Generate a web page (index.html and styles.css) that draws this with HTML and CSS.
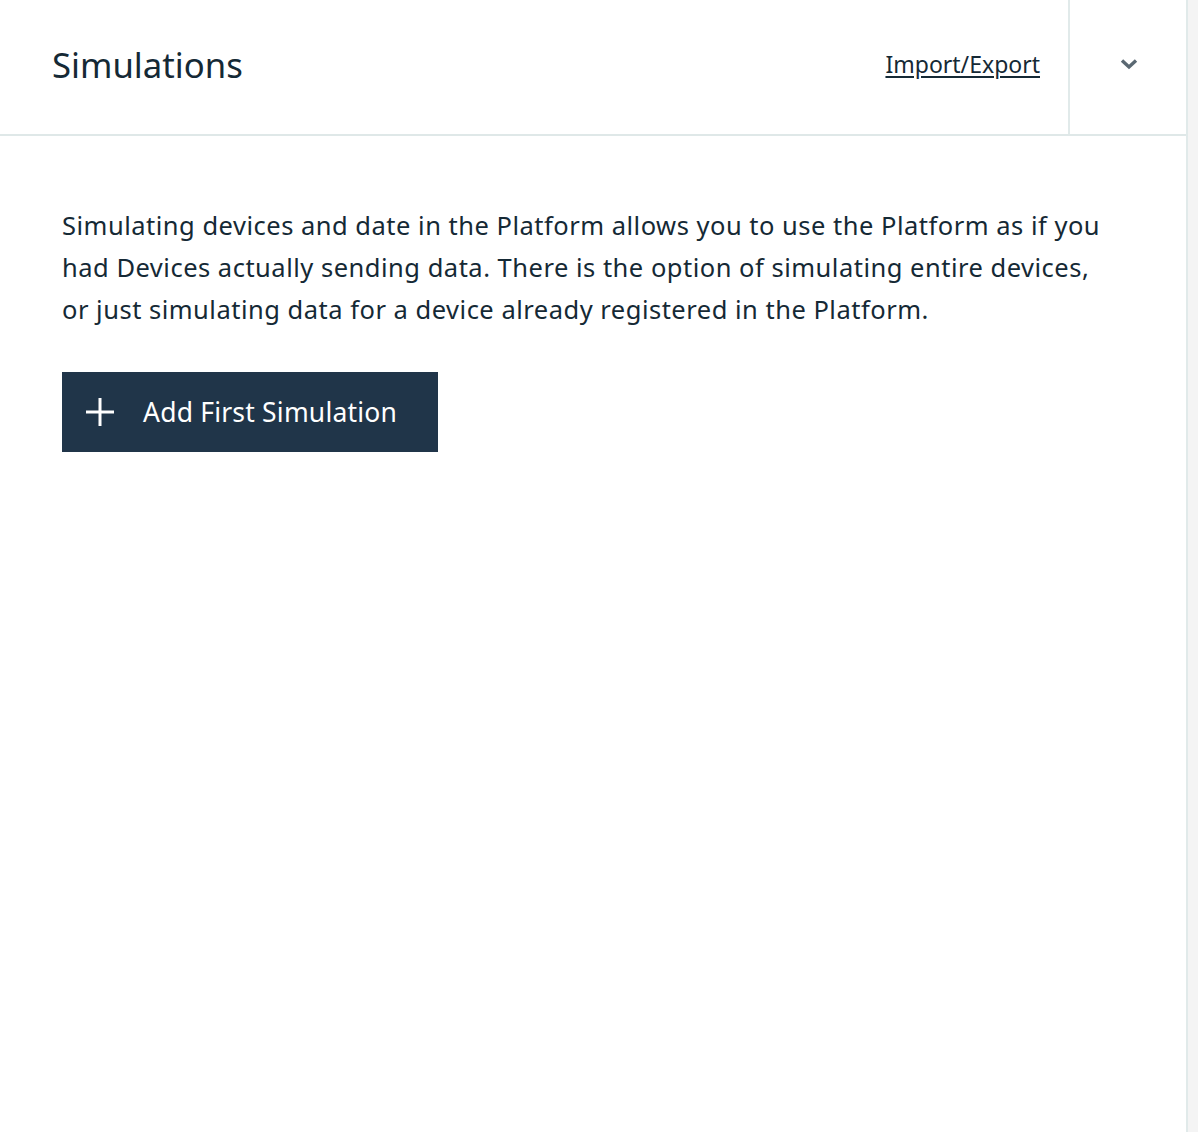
FILE: index.html
```html
<!DOCTYPE html>
<html>
<head>
<meta charset="utf-8">
<link rel="stylesheet" href="styles.css">
</head>
<body>
<div class="page">
  <section class="panel">
    <header class="panel-header">
      <h1 class="title">Simulations</h1>
      <a class="link" href="#">Import/Export</a>
      <div class="toggle">
        <svg width="20" height="12" viewBox="0 0 20 12"><path d="M3 2.5 L10 9 L17 2.5" fill="none" stroke="#5a6872" stroke-width="3.4"/></svg>
      </div>
    </header>
    <div class="panel-body">
      <p class="intro">Simulating devices and date in the Platform allows you to use the Platform as if you had Devices actually sending data. There is the option of simulating entire devices, or just simulating data for a device already registered in the Platform.</p>
      <button class="btn">
        <svg width="30" height="30" viewBox="0 0 30 30"><path d="M15 1 V29 M1 15 H29" stroke="#fff" stroke-width="3"/></svg>
        <span>Add First Simulation</span>
      </button>
    </div>
  </section>
  <div class="strip"></div>
</div>
</body>
</html>
```

FILE: styles.css
```css
* { box-sizing: border-box; }
html, body { margin: 0; padding: 0; background: #fff; }
body { font-family: "Noto Sans", "Open Sans", sans-serif; color: #152935; }
.page { display: flex; height: 1132px; }
.panel { width: 1188px; border-right: 2px solid #e1eaea; display: flex; flex-direction: column; }
.strip { flex: 1; background: #f4f4f4; }
.panel-header { height: 136px; border-bottom: 2px solid #dfe8e8; display: flex; align-items: center; }
.title { margin: 0 0 6px 52px; flex: 1; font-size: 34.7px; font-weight: 400; color: #152935; }
.link { font-size: 23px; color: #152935; text-decoration: underline; text-underline-offset: 3px; margin: 0 28px 6px 0; }
.toggle { width: 118px; height: 100%; border-left: 2px solid #e1eaea; display: flex; align-items: center; justify-content: center; padding: 0 0 6px 2px; }
.panel-body { padding: 68px 62px 0 62px; }
.intro { margin: 0; font-size: 25.5px; letter-spacing: 0.5px; line-height: 42px; max-width: 1060px; color: #152935; }
.btn { margin-top: 42px; width: 376px; height: 80px; background: #203549; border: 0; color: #fff; display: flex; align-items: center; gap: 28px; padding: 0 0 0 23px; font-family: inherit; font-size: 26.5px; letter-spacing: 0.2px; }
```
